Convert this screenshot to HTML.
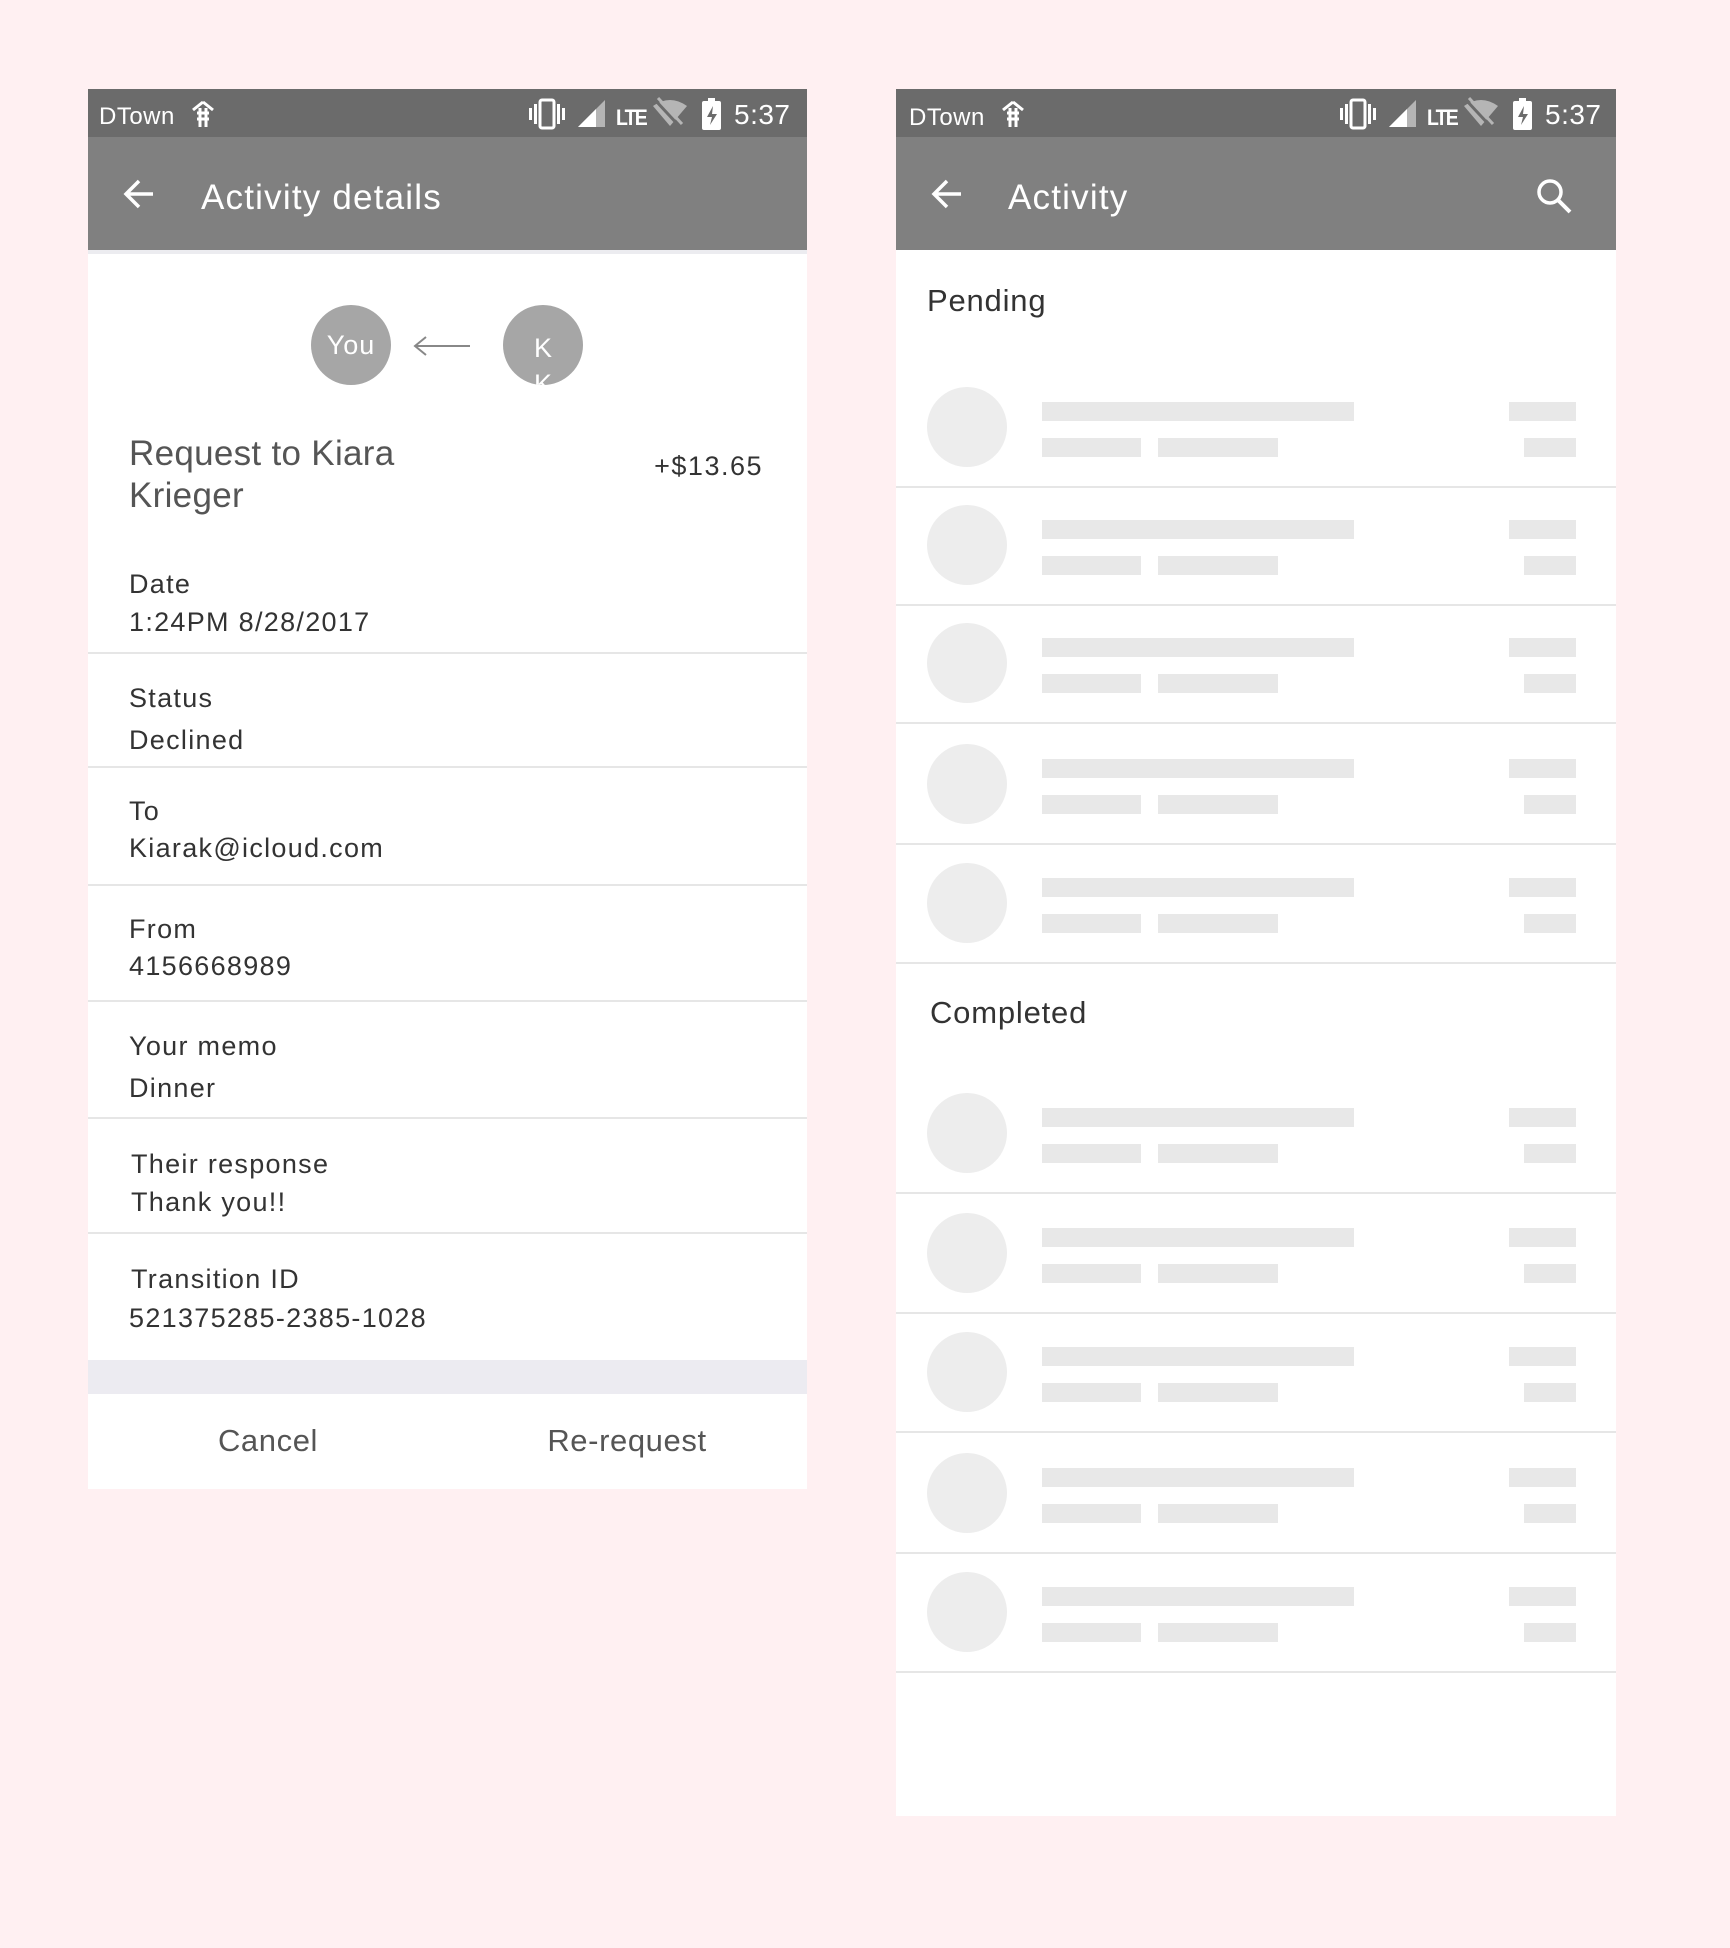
<!DOCTYPE html>
<html><head><meta charset="utf-8"><style>
*{margin:0;padding:0;box-sizing:border-box}
body{width:1730px;height:1948px;background:#fff0f2;position:relative;overflow:hidden;font-family:"Liberation Sans",sans-serif}
.a{position:absolute}
.panel{position:absolute;background:#fff}
.sb{position:absolute;left:0;top:0;height:48px;width:100%;background:#6b6b6b;color:#fff}
.tb{position:absolute;left:0;top:48px;height:113px;width:100%;background:#808080;color:#fff}
.t{position:absolute;color:#333;font-size:27px;line-height:30px;white-space:nowrap;letter-spacing:1.3px}
.hr{position:absolute;left:0;width:100%;height:2px;background:#e6e6e6}
.c{position:absolute;width:80px;height:80px;border-radius:50%;background:#ededed}
.b{position:absolute;background:#e8e8e8;height:19px}
</style></head><body>
<svg width="0" height="0" style="position:absolute"><defs>
<g id="st" fill="#fff">
<rect x="0" y="-6" width="3" height="12"/><rect x="5" y="-10" width="3" height="20"/>
<rect x="11" y="-14" width="14" height="28" rx="2" fill="none" stroke="#fff" stroke-width="3"/>
<rect x="28" y="-10" width="3" height="20"/><rect x="33" y="-6" width="3" height="12"/>
<path d="M49 13 L76 -14 L76 13Z" fill="#b5b5b5"/><path d="M49 13 L67 -5 L67 13Z"/>
<text x="87" y="11" font-size="22" font-weight="bold" font-family="Liberation Sans Narrow,Liberation Sans" letter-spacing="-2" textLength="30" lengthAdjust="spacingAndGlyphs">LTE</text>
<path d="M124 -8 Q141 -20 158 -8 L141 12Z" fill="#b5b5b5"/><path d="M126 -14 L152 14" stroke="#6b6b6b" stroke-width="3"/><path d="M129 -16 L153 10" stroke="#b5b5b5" stroke-width="3"/>
<rect x="173" y="-13" width="19" height="29" rx="2"/><rect x="179" y="-16" width="7" height="4"/>
<path d="M184 -8 L178 3 L183 3 L181 11 L188 0 L183 0Z" fill="#6b6b6b"/>
</g></defs></svg>

<!-- LEFT PANEL -->
<div class="panel" style="left:88px;top:89px;width:719px;height:1400px">
 <div class="sb">
  <div class="a" style="left:11px;top:14px;font-size:24px;letter-spacing:0.5px">DTown</div>
  <svg class="a" style="left:102px;top:11px" width="26" height="28"><path d="M13 2 L3 10 M13 2 L23 10 M7 13H19M7 19H19M10 8V27M16 8V27" stroke="#fff" stroke-width="3" fill="none"/></svg>
  <svg class="a" style="left:441px;top:0" width="200" height="48"><use href="#st" y="25"/></svg>
  <div class="a" style="left:646px;top:10px;font-size:28px;letter-spacing:0.5px">5:37</div>
 </div>
 <div class="tb">
  <svg class="a" style="left:34px;top:40px" width="34" height="34"><path d="M31 17H4M17 4L4 17L17 30" stroke="#fff" stroke-width="3.5" fill="none"/></svg>
  <div class="a" style="left:113px;top:41px;font-size:35px;letter-spacing:1.2px">Activity details</div>
 </div>
 <div class="hr" style="top:161px;height:4px;background:#ececf0"></div>
 <div class="a" style="left:223px;top:216px;width:80px;height:80px;border-radius:50%;background:#a6a6a6;color:#fff;font-size:27px;text-align:center;line-height:80px;letter-spacing:1px">You</div>
 <svg class="a" style="left:324px;top:245px" width="60" height="24"><path d="M58 12H4M14 3L3 12L14 21" stroke="#888" stroke-width="2" fill="none"/></svg>
 <div class="a" style="left:415px;top:216px;width:80px;height:80px;border-radius:50%;background:#a6a6a6;color:#fff;font-size:27px;text-align:center;overflow:hidden"><div style="padding-top:25px;line-height:36px">K<br>K</div></div>
 <div class="t" style="left:41px;top:344px;font-size:35px;line-height:42px;color:#555;letter-spacing:0.3px">Request to Kiara<br>Krieger</div>
 <div class="t" style="right:44px;top:362px;font-size:27px;letter-spacing:1.5px">+$13.65</div>
 <div class="t" style="left:41px;top:480px">Date</div><div class="t" style="left:41px;top:518px">1:24PM 8/28/2017</div>
 <div class="hr" style="top:563px"></div>
 <div class="t" style="left:41px;top:594px">Status</div><div class="t" style="left:41px;top:636px">Declined</div>
 <div class="hr" style="top:677px"></div>
 <div class="t" style="left:41px;top:707px">To</div><div class="t" style="left:41px;top:744px">Kiarak@icloud.com</div>
 <div class="hr" style="top:795px"></div>
 <div class="t" style="left:41px;top:825px">From</div><div class="t" style="left:41px;top:862px">4156668989</div>
 <div class="hr" style="top:911px"></div>
 <div class="t" style="left:41px;top:942px">Your memo</div><div class="t" style="left:41px;top:984px">Dinner</div>
 <div class="hr" style="top:1028px"></div>
 <div class="t" style="left:43px;top:1060px">Their response</div><div class="t" style="left:43px;top:1098px">Thank you!!</div>
 <div class="hr" style="top:1143px"></div>
 <div class="t" style="left:43px;top:1175px">Transition ID</div><div class="t" style="left:41px;top:1214px">521375285-2385-1028</div>
 <div class="a" style="left:0;top:1271px;width:100%;height:34px;background:#ecebf1"></div>
 <div class="t" style="left:180px;top:1334px;width:0;font-size:31px;line-height:36px;color:#555;letter-spacing:0.6px"><span style="position:absolute;transform:translateX(-50%)">Cancel</span></div>
 <div class="t" style="left:539px;top:1334px;width:0;font-size:31px;line-height:36px;color:#555;letter-spacing:0.6px"><span style="position:absolute;transform:translateX(-50%)">Re-request</span></div>
</div>

<!-- RIGHT PANEL -->
<div class="panel" style="left:896px;top:89px;width:720px;height:1727px">
 <div class="sb">
  <div class="a" style="left:13px;top:15px;font-size:24px;letter-spacing:0.5px">DTown</div>
  <svg class="a" style="left:104px;top:11px" width="26" height="28"><path d="M13 2 L3 10 M13 2 L23 10 M7 13H19M7 19H19M10 8V27M16 8V27" stroke="#fff" stroke-width="3" fill="none"/></svg>
  <svg class="a" style="left:444px;top:0" width="200" height="48"><use href="#st" y="25"/></svg>
  <div class="a" style="left:649px;top:10px;font-size:28px;letter-spacing:0.5px">5:37</div>
 </div>
 <div class="tb">
  <svg class="a" style="left:34px;top:40px" width="34" height="34"><path d="M31 17H4M17 4L4 17L17 30" stroke="#fff" stroke-width="3.5" fill="none"/></svg>
  <div class="a" style="left:112px;top:41px;font-size:35px;letter-spacing:1.2px">Activity</div>
  <svg class="a" style="left:639px;top:40px" width="40" height="40"><circle cx="15" cy="15" r="11" stroke="#fff" stroke-width="3.5" fill="none"/><path d="M23 23L35 35" stroke="#fff" stroke-width="4"/></svg>
 </div>
 <div class="t" style="left:31px;top:194px;font-size:31px;line-height:36px;letter-spacing:0.8px">Pending</div>
 <div class="t" style="left:34px;top:906px;font-size:31px;line-height:36px;letter-spacing:0.8px">Completed</div>
</div>
<div id="sk"></div>
<script>
var ys=[427,545,663,784,903,1133,1253,1372,1493,1612],h='';
ys.forEach(function(y){
h+='<div class="c" style="left:927px;top:'+(y-40)+'px"></div>'+
'<div class="b" style="left:1042px;top:'+(y-25)+'px;width:312px"></div>'+
'<div class="b" style="left:1042px;top:'+(y+11)+'px;width:99px"></div>'+
'<div class="b" style="left:1158px;top:'+(y+11)+'px;width:120px"></div>'+
'<div class="b" style="left:1509px;top:'+(y-25)+'px;width:67px"></div>'+
'<div class="b" style="left:1524px;top:'+(y+11)+'px;width:52px"></div>'+
'<div class="hr" style="left:896px;width:720px;top:'+(y+59)+'px"></div>';});
document.getElementById('sk').innerHTML=h;
</script>
</body></html>
